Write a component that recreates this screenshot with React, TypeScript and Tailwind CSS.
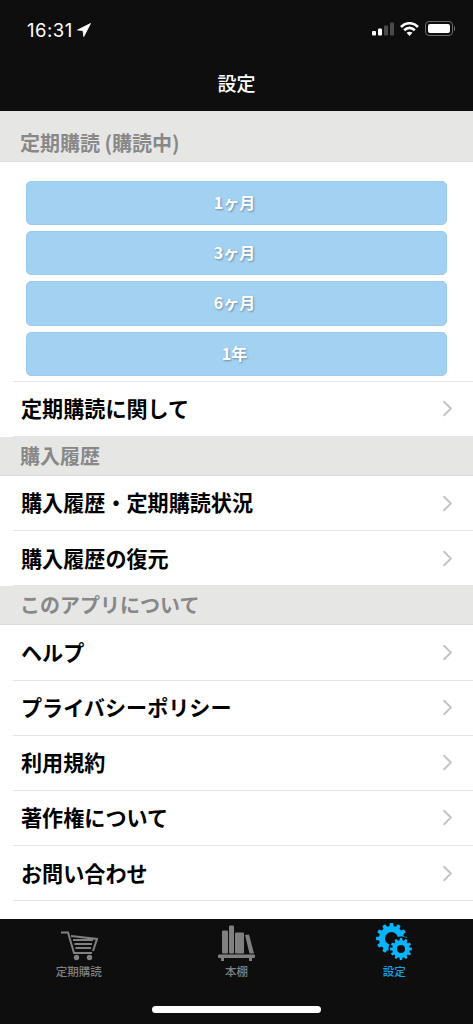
import React from 'react';
import { ChevronRight } from 'lucide-react';

const cjk = { fontFamily: '"Noto Sans CJK JP", "Noto Sans", sans-serif' };

function gearPath(cx: number, cy: number, outer: number, inner: number, hole: number, teeth: number) {
    let d = '';
    const step = (Math.PI * 2) / teeth;
    for (let i = 0; i < teeth; i++) {
        const a = i * step;
        const pts = [
            [inner, a - step * 0.32],
            [outer, a - step * 0.2],
            [outer, a + step * 0.2],
            [inner, a + step * 0.32],
        ];
        pts.forEach(([r, t], j) => {
            const x = (cx + r * Math.cos(t)).toFixed(2);
            const y = (cy + r * Math.sin(t)).toFixed(2);
            d += `${i === 0 && j === 0 ? 'M' : 'L'}${x} ${y} `;
        });
    }
    d += `Z M${cx + hole} ${cy} A${hole} ${hole} 0 1 0 ${cx - hole} ${cy} A${hole} ${hole} 0 1 0 ${cx + hole} ${cy} Z`;
    return d;
}

function StatusBar() {
    return (
        <div className="flex h-[58px] items-start justify-between pl-[27px] pr-[18px] pt-[19px]">
            <div className="flex items-center gap-[4px]">
                <span className="text-[18.5px] leading-[22px] tracking-[0.5px] text-white" style={{ fontFamily: 'Inter, sans-serif' }}>16:31</span>
                <svg width="14" height="14" viewBox="0 0 14 14" className="fill-white">
                    <path d="M13.5 0.5 L0.5 7 L6 7.6 L6.8 13.5 Z" stroke="#fff" strokeWidth="0.8" strokeLinejoin="round" />
                </svg>
            </div>
            <div className="flex items-center gap-[6px] pt-[2px]">
                <svg width="22" height="14" viewBox="0 0 22 14">
                    <rect x="0" y="9" width="4" height="4.5" rx="1" fill="#fff" />
                    <rect x="6" y="6.5" width="4" height="7" rx="1" fill="#fff" />
                    <rect x="12" y="3.5" width="4" height="10" rx="1" fill="#4a4a4a" />
                    <rect x="18" y="0.5" width="4" height="13" rx="1" fill="#4a4a4a" />
                </svg>
                <svg width="19" height="14" viewBox="0 0 19 14" className="fill-none stroke-white">
                    <path d="M1 5 C6 0 13 0 18 5" strokeWidth="2.7" />
                    <path d="M4.2 8.2 C7.4 5.2 11.6 5.2 14.8 8.2" strokeWidth="2.7" />
                    <path d="M9.5 14 L6.6 10.8 C8.2 9.5 10.8 9.5 12.4 10.8 Z" className="fill-white stroke-none" />
                </svg>
                <div className="flex items-center gap-[1px]">
                    <div className="h-[15px] w-[28px] rounded-[4px] border border-[#6a6a6a] p-[2px]">
                        <div className="h-full w-full rounded-[2px] bg-white" />
                    </div>
                    <div className="h-[5px] w-[1.5px] rounded-r bg-[#6a6a6a]" />
                </div>
            </div>
        </div>
    );
}

function SectionHeader({ title, tall }: { title: string; tall?: boolean }) {
    return (
        <div className={`flex items-center border-b border-[#dcdcdc] bg-[#e6e6e5] pl-[20px] ${tall ? 'h-[51px] pt-[13px]' : 'h-[39px]'}`}>
            <span className="text-[20px] font-bold leading-none text-[#888888]">{title}</span>
        </div>
    );
}

function Row({ label, last }: { label: string; last?: boolean }) {
    return (
        <div className={`ml-[13px] flex h-[55.2px] items-center justify-between pl-[8px] pr-[17px] ${last ? 'border-b border-[#e4e4e4]' : 'border-b border-[#e4e4e4] last:border-b-0'}`}>
            <span className="text-[21.1px] font-bold leading-none text-black">{label}</span>
            <ChevronRight className="h-[27px] w-[27px] translate-x-[5px] text-[#c4c4c6]" strokeWidth={1.7} />
        </div>
    );
}

function PlanButton({ label }: { label: string }) {
    return (
        <div className="flex h-[44.2px] items-center justify-center rounded-[5px] border border-[#98cbef] bg-[#a3d1f1]">
            <span className="-translate-x-[2px] -translate-y-[1.5px] text-[16px] font-bold leading-none text-white [text-shadow:1px_1px_2px_rgba(60,90,120,0.55)]">{label}</span>
        </div>
    );
}

function CartIcon() {
    return (
        <svg width="38" height="30" viewBox="0 0 38 30" className="fill-none stroke-[#808080]">
            <path d="M1 1.5 H8 L14 22 H32" strokeWidth="2" />
            <path d="M11 5 L37 8 L33 20" strokeWidth="2" />
            <path d="M13 9 H33 M14.5 13 H32 M15.5 17 H31" strokeWidth="1.8" />
            <circle cx="16.5" cy="26.5" r="2.7" className="fill-[#808080] stroke-none" />
            <circle cx="29.5" cy="26.5" r="2.7" className="fill-[#808080] stroke-none" />
        </svg>
    );
}

function ShelfIcon() {
    return (
        <svg width="38" height="36" viewBox="0 0 38 36" className="fill-[#808080]">
            <rect x="4" y="5.5" width="6" height="23" rx="1" />
            <rect x="11" y="0.5" width="5" height="28" rx="1" />
            <rect x="17" y="7.5" width="9" height="21" rx="1" />
            <path d="M27 10 L31 9.5 L36 28.5 L31.5 28.5 Z" />
            <rect x="0" y="29.5" width="37" height="3.5" rx="1" />
            <rect x="3" y="33" width="3" height="3" />
            <rect x="31" y="33" width="3" height="3" />
        </svg>
    );
}

function GearsIcon() {
    return (
        <svg width="36" height="38" viewBox="0 0 36 38" className="fill-[#09b5ff]">
            <path fillRule="evenodd" d={gearPath(15.5, 15.5, 15.5, 12.5, 6.5, 12)} />
            <circle cx="25" cy="26" r="12.5" className="fill-[#0e0e0e]" />
            <path fillRule="evenodd" d={gearPath(25, 26, 11, 8.8, 4, 12)} />
        </svg>
    );
}

function TabItem({ icon, label, active }: { icon: React.ReactNode; label: string; active?: boolean }) {
    return (
        <div className="flex w-[158px] flex-col items-center">
            <div className="flex h-[42px] items-end">{icon}</div>
            <span className={`mt-[3px] text-[11.5px] font-medium leading-[14px] ${active ? 'text-[#09a5e8]' : 'text-[#808080]'}`}>{label}</span>
        </div>
    );
}

export default function App() {
    return (
        <div className="flex h-[1024px] w-[473px] flex-col overflow-hidden bg-white" style={cjk}>
            <div className="h-[111px] shrink-0 bg-[#0e0e0e]">
                <StatusBar />
                <div className="text-center text-[19px] font-medium leading-[49px] text-white">設定</div>
            </div>

            <SectionHeader title="定期購読 (購読中)" tall />
            <div className="flex flex-col gap-[6px] px-[26px] pb-[5px] pt-[19px]">
                <PlanButton label="1ヶ月" />
                <PlanButton label="3ヶ月" />
                <PlanButton label="6ヶ月" />
                <PlanButton label="1年" />
            </div>
            <div className="ml-[13px] border-t border-[#e4e4e4]" />
            <Row label="定期購読に関して" />

            <SectionHeader title="購入履歴" />
            <Row label="購入履歴・定期購読状況" />
            <Row label="購入履歴の復元" />

            <SectionHeader title="このアプリについて" />
            <Row label="ヘルプ" />
            <Row label="プライバシーポリシー" />
            <Row label="利用規約" />
            <Row label="著作権について" />
            <Row label="お問い合わせ" last />

            <div className="flex-1" />

            <div className="flex h-[105px] shrink-0 flex-col items-center bg-[#0e0e0e]">
                <div className="flex h-[62px] w-full justify-center">
                    <TabItem icon={<CartIcon />} label="定期購読" />
                    <TabItem icon={<ShelfIcon />} label="本棚" />
                    <TabItem icon={<GearsIcon />} label="設定" active />
                </div>
                <div className="mt-[25px] h-[7px] w-[169px] rounded-full bg-white" />
            </div>
        </div>
    );
}
